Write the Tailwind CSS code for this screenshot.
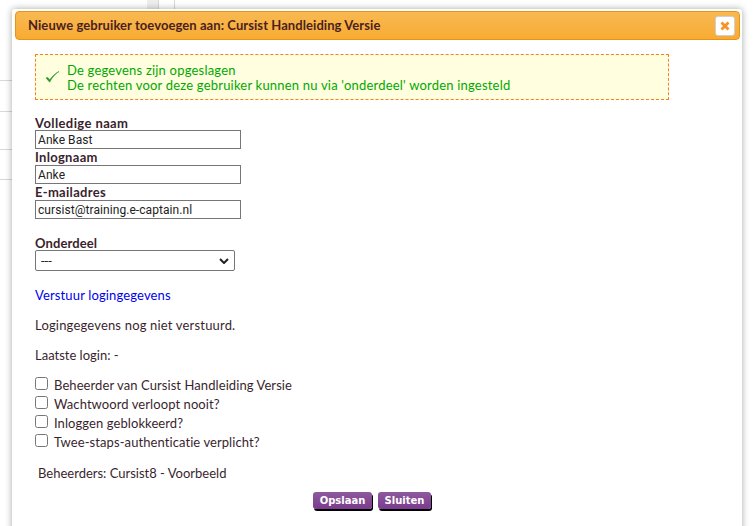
<!DOCTYPE html>
<html lang="en">
<head>
  <meta charset="UTF-8" />
  <title>Nieuwe gebruiker</title>
  <script src="https://cdn.jsdelivr.net/npm/@tailwindcss/browser@4"></script>
</head>
<body class="bg-white overflow-hidden h-[526px] relative font-['Lato',sans-serif] text-[13px] text-[#3a1f2e]">

  <!-- page behind the dialog -->
  <div class="absolute left-0 top-[80px] w-[12px] h-px bg-[#d8d8d8]"></div>
  <div class="absolute left-0 top-[111px] w-[12px] h-px bg-[#d8d8d8]"></div>
  <div class="absolute left-0 top-[149px] w-[12px] h-px bg-[#d8d8d8]"></div>
  <div class="absolute left-0 top-[179px] w-[12px] h-px bg-[#d8d8d8]"></div>
  <div class="absolute left-[147px] top-0 w-[11px] h-[9px] bg-[#eeeeee]"></div>
  <div class="absolute left-[158px] top-0 w-px h-[9px] bg-[#d8d8d8]"></div>
  <div class="absolute left-[174px] top-0 w-px h-[9px] bg-[#d8d8d8]"></div>

  <!-- dialog -->
  <div class="absolute left-[12px] top-[9px] w-[730px] h-[530px] bg-white rounded-[3px] pt-[2px] pl-[3px] pr-[2px] shadow-[0_0_7px_rgba(0,0,0,0.35)]">
    <div class="h-[29px] flex items-center justify-between pl-[12px] pr-[4px] rounded-[4px] border border-[#e59419] bg-[linear-gradient(#f8b952,#f8ab33)]">
      <span class="font-bold text-[13px] tracking-[0.07px] text-[#4a1f1f]">Nieuwe gebruiker toevoegen aan: Cursist Handleiding Versie</span>
      <button class="w-5 h-5 flex items-center justify-center bg-white border border-[#d0d0d0] rounded-[3px]">
        <svg width="10" height="10" viewBox="0 0 10 10"><path d="M1.5 1.5L8.5 8.5M8.5 1.5L1.5 8.5" stroke="#f7931e" stroke-width="2.8" /></svg>
      </button>
    </div>

    <div class="pl-[20px] pt-[14px]">
      <div class="w-[634px] h-[46px] flex items-center gap-[7px] pl-[9px] border border-dashed border-[#f58220] bg-[#ffffe0] text-[#00a800] leading-[15px]">
        <svg width="15" height="14" viewBox="0 0 16 14"><path d="M1 8L5 12.5C7.5 7.5 10.5 4 15 1C10.5 3.5 7.5 6.5 5 10L3 7.5Z" fill="#2a9a2a" stroke="#2a9a2a" stroke-width="0.6" /></svg>
        <div class="pt-px tracking-[0.2px]">De gegevens zijn opgeslagen<br />De rechten voor deze gebruiker kunnen nu via 'onderdeel' worden ingesteld</div>
      </div>

      <div class="mt-[16px] flex flex-col items-start">
        <label class="font-bold leading-[14px] tracking-[0.4px]">Volledige naam</label>
        <input value="Anke Bast" class="w-[206px] h-[19px] border border-[#767676] px-[2px] text-[12px] tracking-[0.07px] font-['Roboto',sans-serif] text-[#222]" />
        <label class="font-bold pt-px leading-[15px] tracking-[0.3px]">Inlognaam</label>
        <input value="Anke" class="w-[206px] h-[19px] border border-[#767676] px-[2px] text-[12px] tracking-[0.07px] font-['Roboto',sans-serif] text-[#222]" />
        <label class="font-bold pt-px leading-[15px] tracking-[0.3px]">E-mailadres</label>
        <input value="cursist@training.e-captain.nl" class="w-[206px] h-[19px] border border-[#767676] px-[2px] text-[12px] tracking-[0.07px] font-['Roboto',sans-serif] text-[#222]" />
        <label class="mt-[17px] font-bold leading-[14px] tracking-[0.1px]">Onderdeel</label>
        <div class="w-[200px] h-[21px] border border-[#767676] rounded-[2px] flex items-center justify-between pl-[5px] pr-[5px] font-['Roboto',sans-serif] text-[#222]">
          <span>---</span>
          <svg width="10" height="6" viewBox="0 0 10 6"><path d="M1 1L5 5L9 1" fill="none" stroke="#222" stroke-width="2" /></svg>
        </div>
      </div>

      <div class="mt-[16px] text-[#0000ee] leading-[16px] tracking-[0.14px]">Verstuur logingegevens</div>
      <div class="mt-[14px] leading-[16px] tracking-[0.18px]">Logingegevens nog niet verstuurd.</div>
      <div class="mt-[14px] leading-[16px]">Laatste login: -</div>

      <div class="mt-[13px] flex flex-col tracking-[0.08px]">
        <label class="h-[19px] flex items-center gap-[6px]"><input type="checkbox" class="w-[13px] h-[13px] -mt-[5px]" />Beheerder van Cursist Handleiding Versie</label>
        <label class="h-[19px] flex items-center gap-[6px]"><input type="checkbox" class="w-[13px] h-[13px] -mt-[5px]" />Wachtwoord verloopt nooit?</label>
        <label class="h-[19px] flex items-center gap-[6px]"><input type="checkbox" class="w-[13px] h-[13px] -mt-[5px]" />Inloggen geblokkeerd?</label>
        <label class="h-[19px] flex items-center gap-[6px]"><input type="checkbox" class="w-[13px] h-[13px] -mt-[5px]" />Twee-staps-authenticatie verplicht?</label>
      </div>

      <div class="mt-[13px] ml-[3px] leading-[16px]">Beheerders: Cursist8 - Voorbeeld</div>
    </div>

    <div class="mt-[11px] flex justify-center gap-[6px] pr-[11px]">
      <button class="h-[17px] w-[59px] rounded-[3px] bg-[linear-gradient(#8d5a9b,#7a3a8e)] text-white font-bold font-['DejaVu_Sans',sans-serif] text-[10px] leading-none shadow-[1px_2px_0_#000]">Opslaan</button>
      <button class="h-[17px] w-[53px] rounded-[3px] bg-[linear-gradient(#8d5a9b,#7a3a8e)] text-white font-bold font-['DejaVu_Sans',sans-serif] text-[10px] leading-none shadow-[1px_2px_0_#000]">Sluiten</button>
    </div>
  </div>
</body>
</html>
